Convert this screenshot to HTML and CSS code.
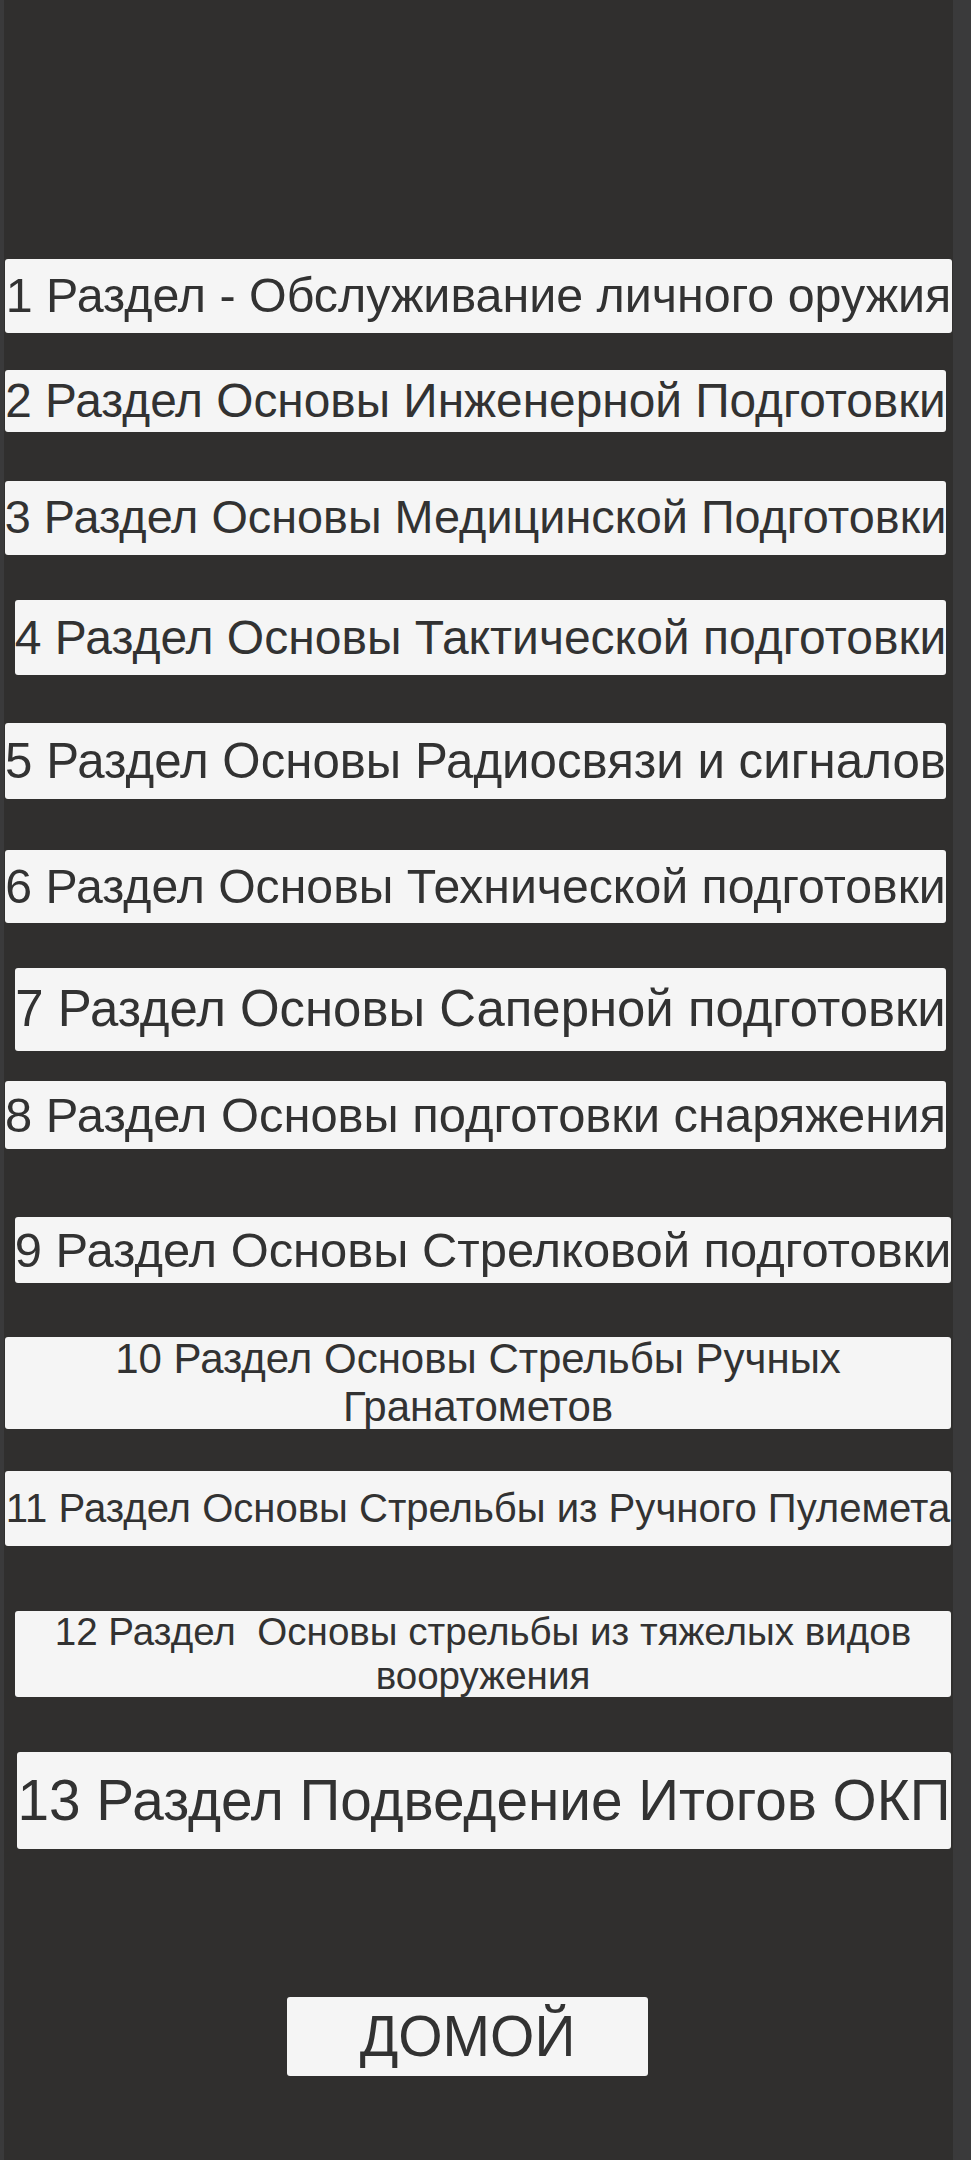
FILE: index.html
```html
<!DOCTYPE html>
<html lang="ru">
<head>
<meta charset="utf-8">
<title>Разделы</title>
<link rel="stylesheet" href="styles.css">
</head>
<body>
<main class="panel">
  <div class="menu">
    <button class="btn b1"><span>1 Раздел - Обслуживание личного оружия</span></button>
    <button class="btn b2"><span>2 Раздел Основы Инженерной Подготовки</span></button>
    <button class="btn b3"><span>3 Раздел Основы Медицинской Подготовки</span></button>
    <button class="btn b4"><span>4 Раздел Основы Тактической подготовки</span></button>
    <button class="btn b5"><span>5 Раздел Основы Радиосвязи и сигналов</span></button>
    <button class="btn b6"><span>6 Раздел Основы Технической подготовки</span></button>
    <button class="btn b7"><span>7 Раздел Основы Саперной подготовки</span></button>
    <button class="btn b8"><span>8 Раздел Основы подготовки снаряжения</span></button>
    <button class="btn b9"><span>9 Раздел Основы Стрелковой подготовки</span></button>
    <button class="btn multi b10"><span>10 Раздел Основы Стрельбы Ручных Гранатометов</span></button>
    <button class="btn b11"><span>11 Раздел Основы Стрельбы из Ручного Пулемета</span></button>
    <button class="btn multi b12"><span>12 Раздел  Основы стрельбы из тяжелых видов вооружения</span></button>
    <button class="btn b13"><span>13 Раздел Подведение Итогов ОКП</span></button>
    <button class="btn home"><span>ДОМОЙ</span></button>
  </div>
</main>
</body>
</html>
```
FILE: styles.css
```css
html, body {
  margin: 0;
  padding: 0;
}
body {
  background: #3a3a3b;
  font-family: "Liberation Sans", Arial, sans-serif;
  width: 971px;
  min-height: 2160px;
}
.panel {
  margin-left: 4px;
  width: 949px;
  min-height: 2160px;
  background: #302f2e;
}
.menu {
  display: flex;
  flex-direction: column;
  align-items: flex-start;
}
.btn {
  display: flex;
  align-items: center;
  justify-content: center;
  box-sizing: border-box;
  margin: 0;
  padding: 0;
  border: none;
  border-radius: 3px;
  background: #f5f5f5;
  color: #323232;
  font-family: "Liberation Sans", Arial, sans-serif;
  line-height: 1.15;
  text-align: center;
  white-space: nowrap;
  overflow: visible;
}
.btn span {
  display: block;
  flex: none;
}
.multi {
  white-space: pre-wrap;
}
.multi span {
  flex: 1 1 auto;
}
.b1  { margin: 259px 0 0 1px;  width: 947px; height: 74px; font-size: 48.4px; }
.b2  { margin: 37px 0 0 1px;   width: 941px; height: 62px; font-size: 47.8px; }
.b3  { margin: 49px 0 0 1px;   width: 941px; height: 74px; font-size: 46.8px; }
.b4  { margin: 45px 0 0 11px;  width: 931px; height: 75px; font-size: 48px; }
.b5  { margin: 48px 0 0 1px;   width: 941px; height: 76px; font-size: 49.2px; }
.b6  { margin: 51px 0 0 1px;   width: 941px; height: 73px; font-size: 48.2px; }
.b7  { margin: 45px 0 0 11px;  width: 931px; height: 83px; font-size: 50.9px; }
.b8  { margin: 30px 0 0 1px;   width: 941px; height: 68px; font-size: 48.9px; }
.b9  { margin: 68px 0 0 11px;  width: 936px; height: 66px; font-size: 48.9px; }
.b10 { margin: 54px 0 0 1px;   width: 946px; height: 92px; font-size: 42px; }
.b11 { margin: 42px 0 0 1px;   width: 946px; height: 75px; font-size: 40.1px; }
.b12 { margin: 65px 0 0 11px;  width: 936px; height: 86px; font-size: 38.6px; }
.b13 { margin: 55px 0 0 13px;  width: 934px; height: 97px; font-size: 56.7px; }
.home { margin: 148px 0 0 283px; width: 361px; height: 79px; font-size: 57px; }
```
